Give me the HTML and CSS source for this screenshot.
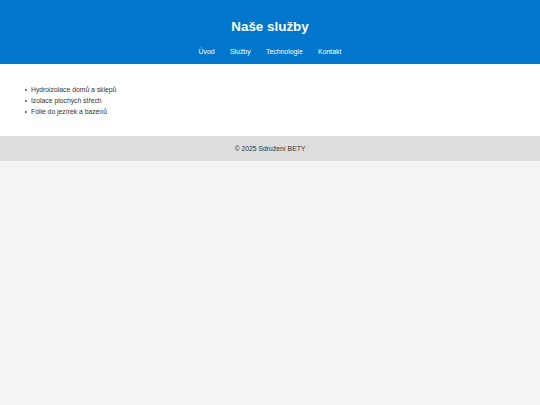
FILE: index.html
```html
<!DOCTYPE html>
<html lang="cs">
<head>
<meta charset="utf-8">
<title>Naše služby</title>
<link rel="stylesheet" href="styles.css">
</head>
<body>
<header class="site-header">
  <h1 class="site-title">Naše služby</h1>
  <nav class="site-nav">
    <a href="#">Úvod</a>
    <a href="#">Služby</a>
    <a href="#">Technologie</a>
    <a href="#">Kontakt</a>
  </nav>
</header>
<main class="content">
  <ul class="services">
    <li>Hydroizolace domů a sklepů</li>
    <li>Izolace plochých střech</li>
    <li>Fólie do jezírek a bazénů</li>
  </ul>
</main>
<footer class="site-footer">© 2025 Sdružení BETY</footer>
</body>
</html>
```
FILE: styles.css
```css
html, body {
  margin: 0;
  padding: 0;
}
body {
  background: #f4f4f4;
  font-family: "Liberation Sans", Arial, sans-serif;
  color: #333;
}
.site-header {
  background: #0077cc;
  color: #fff;
  text-align: center;
  padding: 19px 0 7.5px;
}
.site-title {
  margin: 0;
  font-size: 13.4px;
  line-height: 16px;
  font-weight: bold;
}
.site-nav {
  margin-top: 11.5px;
  font-size: 6.9px;
  line-height: 10px;
  display: flex;
  justify-content: center;
  gap: 15.3px;
}
.site-nav a {
  color: #fff;
  text-decoration: none;
}
.content {
  background: #fff;
  padding: 19.5px 31px;
}
.services {
  margin: 0;
  padding: 0;
  list-style: none;
  font-size: 6.8px;
  line-height: 11px;
}
.services li::before {
  content: "";
  display: inline-block;
  width: 2.2px;
  height: 2.2px;
  border-radius: 50%;
  background: #555;
  margin-left: -5.8px;
  margin-right: 3.6px;
  vertical-align: 0.12em;
}
.site-footer {
  background: #ddd;
  text-align: center;
  font-size: 6.8px;
  line-height: 25px;
  color: #333;
}
```
